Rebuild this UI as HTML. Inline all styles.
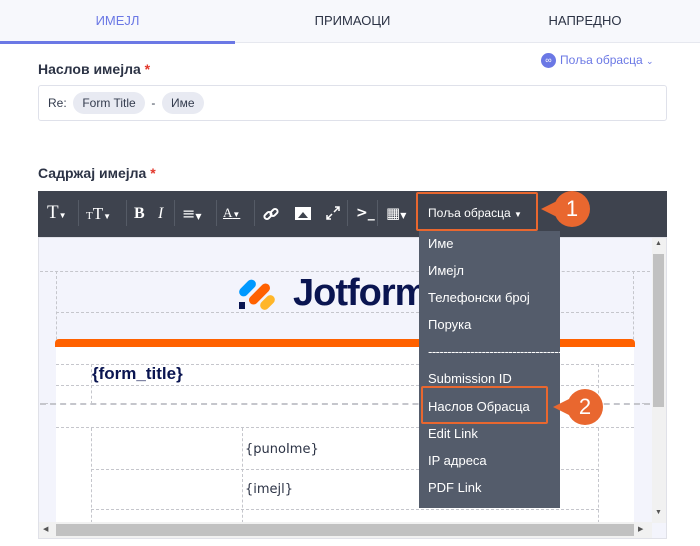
<!DOCTYPE html>
<html><head><meta charset="utf-8"><style>
*{margin:0;padding:0;box-sizing:border-box}
body{width:700px;height:546px;overflow:hidden;background:#fff;font-family:"Liberation Sans",sans-serif;position:relative}
.a{position:absolute}
.tab{top:0;height:42px;line-height:42px;font-size:13px;color:#2c3345;text-align:center}
.lbl{font-size:14px;font-weight:bold;color:#2c3345}
.req{color:#e2372b}
.chip{display:inline-block;background:#e8eaf2;border-radius:11px;padding:0 9px;height:22px;line-height:22px;font-size:12px;color:#343c4e}
.tb{color:#fff;font-size:15px;top:205px;font-family:"Liberation Serif",serif}
.sep{top:200px;width:1px;height:26px;background:#555b66}
.dd{left:419px;width:141px;top:231px;height:277px;background:#545c6b}
.it{left:428px;color:#fff;font-size:13px}
.dash{border:1px dashed #c5c6cc}
</style></head><body>
<div class="a" style="left:0;top:0;width:700px;height:43px;background:#f7f8fc;border-bottom:1px solid #e6e8ef"></div>
<div class="a tab" style="left:0;width:235px;color:#6b78e5">ИМЕЈЛ</div>
<div class="a tab" style="left:235px;width:235px">ПРИМАОЦИ</div>
<div class="a tab" style="left:470px;width:230px">НАПРЕДНО</div>
<div class="a" style="left:0;top:41px;width:235px;height:3px;background:#6b78e5"></div>

<div class="a lbl" style="left:38px;top:61px">Наслов имејла <span class="req">*</span></div>
<div class="a" style="left:541px;top:53px;width:15px;height:15px;border-radius:50%;background:#6b78e5;color:#fff;font-size:9px;text-align:center;line-height:15px">&#8734;</div>
<div class="a" style="left:560px;top:53px;font-size:12px;color:#6b78e5">Поља обрасца <span style="font-size:9px">&#8964;</span></div>
<div class="a" style="left:38px;top:85px;width:629px;height:36px;border:1px solid #dfe1ea;border-radius:3px"></div>
<div class="a" style="left:48px;top:92px;font-size:12px;color:#343c4e;line-height:22px">Re:&nbsp; <span class="chip">Form Title</span>&nbsp; - &nbsp;<span class="chip">Име</span></div>

<div class="a lbl" style="left:38px;top:165px">Садржај имејла <span class="req">*</span></div>

<div class="a" style="left:38px;top:191px;width:629px;height:46px;background:#3e434e"></div>
<div class="a tb" style="left:47px;font-size:19px;top:202px">T<span style="font-size:8px;font-family:'Liberation Sans'">&#9660;</span></div>
<div class="a sep" style="left:78px"></div>
<div class="a tb" style="left:86px;font-size:17px;top:204px"><span style="font-size:11px">T</span>T<span style="font-size:8px;font-family:'Liberation Sans'">&#9660;</span></div>
<div class="a sep" style="left:126px"></div>
<div class="a tb" style="left:134px;font-weight:bold;font-size:16px;top:205px">B</div>
<div class="a tb" style="left:158px;font-style:italic;font-size:16px;top:205px">I</div>
<div class="a sep" style="left:174px"></div>
<div class="a tb" style="left:182px;font-size:16px;top:204px;font-family:'DejaVu Sans'">&#8801;<span style="font-size:8px">&#9660;</span></div>
<div class="a sep" style="left:216px"></div>
<div class="a tb" style="left:223px;font-size:13px;top:205px;text-decoration:underline">A<span style="font-size:8px;font-family:'Liberation Sans'">&#9660;</span></div>
<div class="a sep" style="left:254px"></div>
<svg class="a" style="left:263px;top:206px" width="16" height="16" viewBox="0 0 16 16"><g fill="none" stroke="#fff" stroke-width="2"><rect x="1" y="7" width="8" height="5" rx="2.5" transform="rotate(-45 5 9.5)"/><rect x="7" y="4" width="8" height="5" rx="2.5" transform="rotate(-45 11 6.5)"/></g></svg>
<div class="a" style="left:295px;top:207px;width:16px;height:13px;background:#fff"><div class="a" style="left:3px;top:5px;border-left:5px solid transparent;border-right:5px solid transparent;border-bottom:6px solid #3e434e"></div></div>
<svg class="a" style="left:325px;top:205px" width="16" height="16" viewBox="0 0 16 16"><g fill="none" stroke="#fff" stroke-width="1.5"><path d="M2 14L7 9M9 7L14 2M10 2H14V6M2 10V14H6"/></g></svg>
<div class="a sep" style="left:347px"></div>
<div class="a tb" style="left:356px;font-size:14px;top:205px;font-family:'DejaVu Sans';font-weight:bold">&gt;_</div>
<div class="a sep" style="left:377px"></div>
<div class="a tb" style="left:386px;font-size:15px;top:204px;font-family:'DejaVu Sans'">&#9638;<span style="font-size:8px">&#9660;</span></div>
<div class="a" style="left:428px;top:206px;color:#fff;font-size:12px">Поља обрасца <span style="font-size:8px">&#9660;</span></div>
<div class="a" style="left:416px;top:192px;width:122px;height:39px;border:2px solid #e9672f;border-radius:2px"></div>

<div class="a" style="left:38px;top:237px;width:629px;height:302px;background:#f3f4fc;border:1px solid #e0e1e8"></div>
<div class="a dash" style="left:40px;top:271px;width:610px;height:133px;border-width:1px 0 1px 0"></div>
<div class="a dash" style="left:56px;top:271px;width:578px;height:260px;border-width:0 1px"></div>
<div class="a" style="left:56px;top:312px;width:578px;border-top:1px dashed #c5c6cc"></div>
<div class="a" style="left:55px;top:339px;width:580px;height:8px;background:#ff6100;border-radius:4px 4px 0 0"></div>
<div class="a" style="left:56px;top:347px;width:578px;height:184px;background:#fff"></div>
<div class="a dash" style="left:56px;top:364px;width:578px;height:22px;border-width:1px 0"></div>
<div class="a dash" style="left:91px;top:364px;width:508px;height:40px;border-width:0 1px"></div>
<div class="a" style="left:40px;top:403px;width:610px;border-top:2px dashed #c5c6cc"></div>
<div class="a" style="left:56px;top:427px;width:578px;border-top:1px dashed #c5c6cc"></div>
<div class="a dash" style="left:91px;top:428px;width:508px;height:100px;border-width:0 1px"></div>
<div class="a" style="left:242px;top:428px;height:100px;border-left:1px dashed #c5c6cc"></div>
<div class="a" style="left:91px;top:469px;width:508px;border-top:1px dashed #c5c6cc"></div>
<div class="a" style="left:91px;top:509px;width:508px;border-top:1px dashed #c5c6cc"></div>
<div class="a" style="left:92px;top:364px;font-size:17px;font-weight:bold;color:#0a1551">{form_title}</div>
<div class="a" style="left:245px;top:442px;font-size:13px;color:#2c3345;font-family:'DejaVu Sans'">{punoIme}</div>
<div class="a" style="left:245px;top:482px;font-size:13px;color:#2c3345;font-family:'DejaVu Sans'">{imejl}</div>
<!-- logo -->
<div class="a" style="left:243px;top:278px;width:9px;height:20px;background:#0099ff;border-radius:5px;transform:rotate(45deg)"></div>
<div class="a" style="left:255px;top:281px;width:9px;height:26px;background:#ff6100;border-radius:5px;transform:rotate(45deg)"></div>
<div class="a" style="left:263px;top:294px;width:9px;height:17px;background:#ffb629;border-radius:5px;transform:rotate(45deg)"></div>
<div class="a" style="left:239px;top:302px;width:6px;height:7px;background:#0a1551"></div>
<div class="a" style="left:293px;top:272px;font-size:38px;font-weight:bold;color:#0a1551;letter-spacing:-1px">Jotform</div>

<div class="a" style="left:652px;top:238px;width:14px;height:285px;background:#f1f1f1"></div>
<div class="a" style="left:653px;top:254px;width:11px;height:153px;background:#c1c1c1"></div>
<div class="a" style="left:655px;top:240px;font-size:7px;color:#555">&#9650;</div>
<div class="a" style="left:655px;top:509px;font-size:7px;color:#555">&#9660;</div>
<div class="a" style="left:39px;top:522px;width:613px;height:16px;background:#f1f1f1"></div>
<div class="a" style="left:56px;top:524px;width:578px;height:12px;background:#c1c1c1"></div>
<div class="a" style="left:43px;top:525px;font-size:7px;color:#555">&#9664;</div>
<div class="a" style="left:638px;top:525px;font-size:7px;color:#555">&#9654;</div>

<div class="a dd"></div>
<div class="a it" style="top:236px">Име</div>
<div class="a it" style="top:263px">Имејл</div>
<div class="a it" style="top:290px">Телефонски број</div>
<div class="a it" style="top:317px">Порука</div>
<div class="a it" style="top:344px;letter-spacing:-0.5px">------------------------------------</div>
<div class="a it" style="top:371px">Submission ID</div>
<div class="a it" style="top:399px">Наслов Обрасца</div>
<div class="a it" style="top:426px">Edit Link</div>
<div class="a it" style="top:453px">IP адреса</div>
<div class="a it" style="top:480px">PDF Link</div>
<div class="a" style="left:421px;top:386px;width:127px;height:38px;border:2px solid #e9672f;border-radius:2px"></div>

<div class="a" style="left:541px;top:201px;border-top:8px solid transparent;border-bottom:8px solid transparent;border-right:16px solid #e9672f"></div>
<div class="a" style="left:554px;top:191px;width:36px;height:36px;border-radius:50%;background:#e9672f;color:#fff;font-size:22px;text-align:center;line-height:36px">1</div>
<div class="a" style="left:553px;top:399px;border-top:8px solid transparent;border-bottom:8px solid transparent;border-right:16px solid #e9672f"></div>
<div class="a" style="left:567px;top:389px;width:36px;height:36px;border-radius:50%;background:#e9672f;color:#fff;font-size:22px;text-align:center;line-height:36px">2</div>
</body></html>
